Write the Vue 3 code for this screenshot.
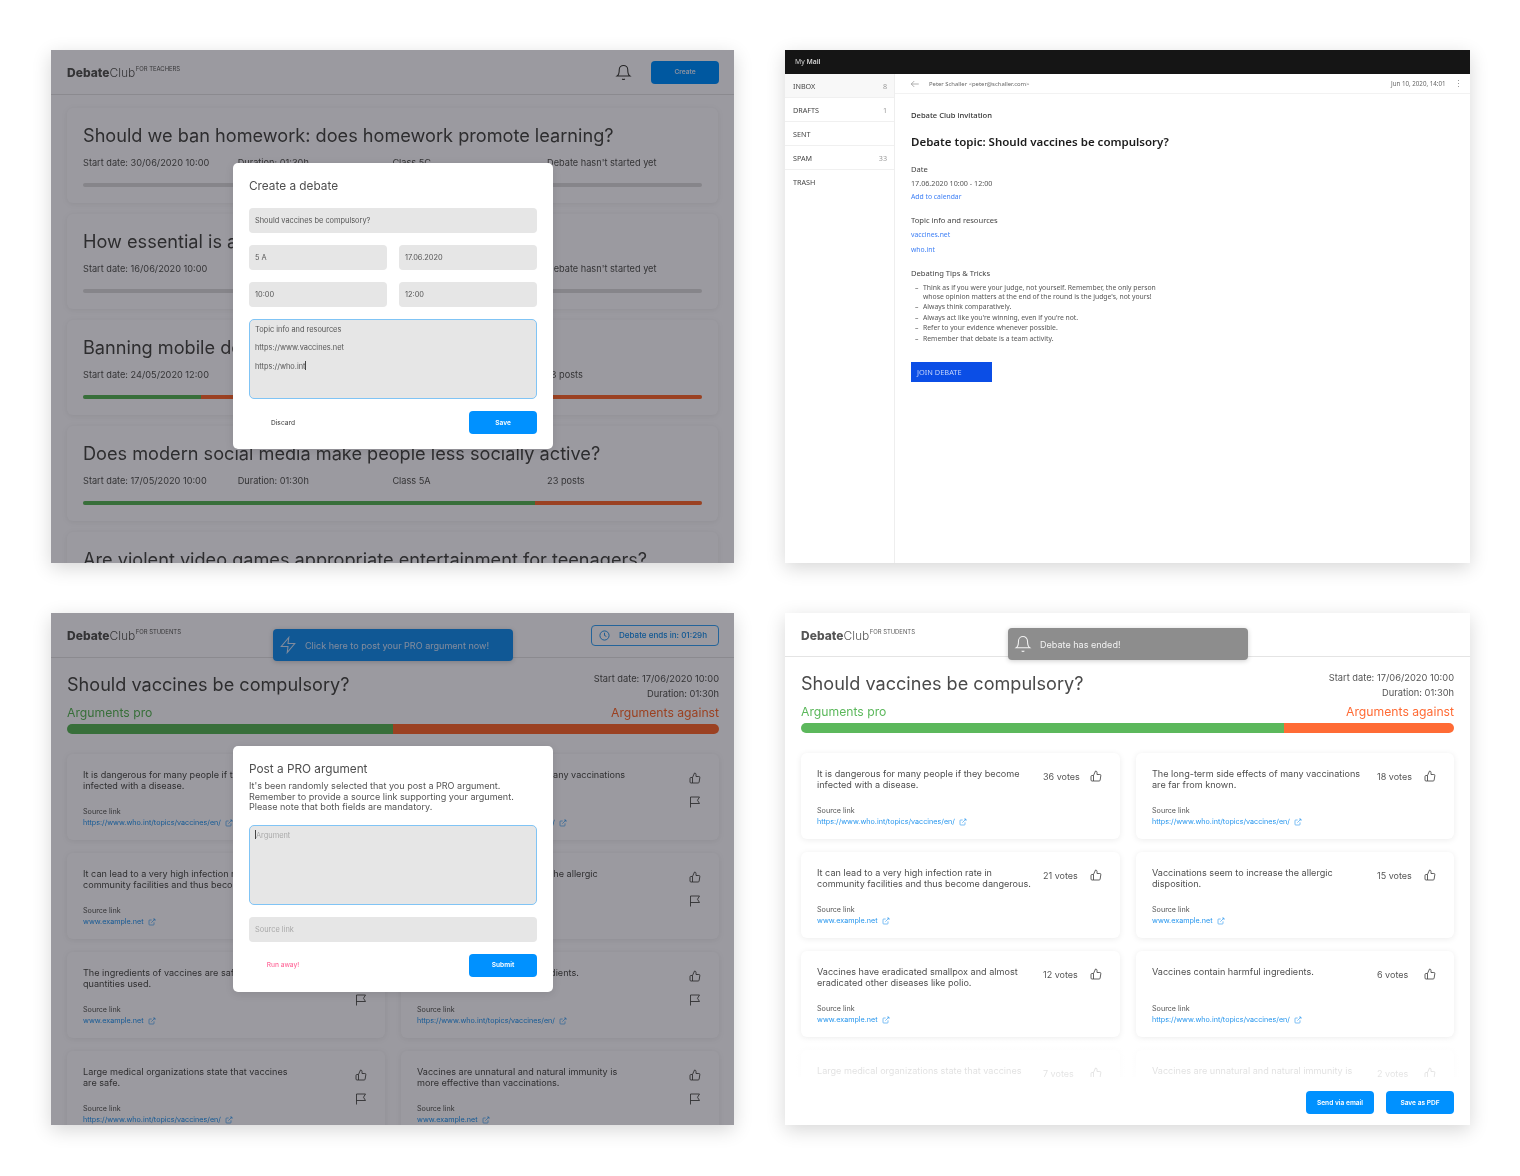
<template>
  <div class="board">
    <!-- teacher dashboard with create modal -->
    <section class="screen">
      <header class="top">
        <div class="logo"><b>Debate</b>Club<sup>FOR TEACHERS</sup></div>
        <div class="top-right">
          <svg class="bell" viewBox="0 0 24 24"><path d="M18 8A6 6 0 0 0 6 8c0 7-3 9-3 9h18s-3-2-3-9" /><path d="M13.73 21a2 2 0 0 1-3.46 0" /></svg>
          <button class="btn create">Create</button>
        </div>
      </header>
      <div class="debates">
        <article v-for="d in debates" :key="d.title" class="debate">
          <h2>{{ d.title }}</h2>
          <div class="facts">
            <span>Start date: {{ d.start }}</span>
            <span>Duration: 01:30h</span>
            <span>{{ d.klass }}</span>
            <span>{{ d.status }}</span>
          </div>
          <div class="line">
            <i v-if="d.pro" class="line-pro" :style="{ width: d.pro + '%' }"></i>
            <i v-if="d.pro" class="line-con"></i>
          </div>
        </article>
      </div>
      <div class="dim"></div>
      <div class="modal modal-create">
        <h3>Create a debate</h3>
        <div class="field">Should vaccines be compulsory?</div>
        <div class="pair">
          <div class="field">5 A</div>
          <div class="field">17.06.2020</div>
        </div>
        <div class="pair">
          <div class="field">10:00</div>
          <div class="field">12:00</div>
        </div>
        <div class="area">
          <p>Topic info and resources</p>
          <p>https://www.vaccines.net</p>
          <p>https://who.int<span class="caret"></span></p>
        </div>
        <div class="modal-foot">
          <span class="ghost">Discard</span>
          <button class="btn">Save</button>
        </div>
      </div>
    </section>

    <!-- mail client -->
    <section class="screen mail">
      <div class="mail-bar">My <b>Mail</b></div>
      <div class="mail-body">
        <aside class="folders">
          <div v-for="f in folders" :key="f.name" class="folder" :class="{ current: f.name === 'INBOX' }">
            <span>{{ f.name }}</span><em>{{ f.count }}</em>
          </div>
        </aside>
        <div class="message">
          <div class="msg-head">
            <svg class="back" viewBox="0 0 24 24"><path d="M21 12H3M10 5l-7 7 7 7" /></svg>
            <span class="from">Peter Schaller &lt;peter@schaller.com&gt;</span>
            <span class="when">Jun 10, 2020, 14:01</span>
            <span class="dots"><i></i><i></i><i></i></span>
          </div>
          <div class="msg-text">
            <h4>Debate Club invitation</h4>
            <h3>Debate topic: Should vaccines be compulsory?</h3>
            <h5>Date</h5>
            <p class="date">17.06.2020 10:00 - 12:00</p>
            <a class="cal">Add to calendar</a>
            <h5 class="topic">Topic info and resources</h5>
            <a class="res">vaccines.net</a>
            <a class="res">who.int</a>
            <h5 class="tips">Debating Tips &amp; Tricks</h5>
            <ul>
              <li>Think as if you were your judge, not yourself. Remember, the only person whose opinion matters at the end of the round is the judge's, not yours!</li>
              <li>Always think comparatively.</li>
              <li>Always act like you're winning, even if you're not.</li>
              <li>Refer to your evidence whenever possible.</li>
              <li>Remember that debate is a team activity.</li>
            </ul>
            <button class="join">JOIN DEBATE</button>
          </div>
        </div>
      </div>
    </section>

    <!-- student view, posting an argument -->
    <section class="screen posting">
      <header class="top">
        <div class="logo"><b>Debate</b>Club<sup>FOR STUDENTS</sup></div>
        <div class="timer">
          <svg viewBox="0 0 24 24"><circle cx="12" cy="12" r="10" /><path d="M12 6v6l4 2" /></svg>
          Debate ends in: 01:29h
        </div>
      </header>
      <div class="toast toast-blue">
        <svg viewBox="0 0 24 24"><path d="M13 2 3 14h9l-1 8 10-12h-9l1-8z" /></svg>
        Click here to post your PRO argument now!
      </div>
      <div class="debate-head">
        <div class="head-row">
          <h1>Should vaccines be compulsory?</h1>
          <div class="head-meta">Start date: 17/06/2020 10:00<br />Duration: 01:30h</div>
        </div>
        <div class="sides"><span class="pro">Arguments pro</span><span class="con">Arguments against</span></div>
        <div class="meter"><i class="meter-pro" style="width: 50%"></i><i class="meter-con"></i></div>
      </div>
      <div class="args">
        <article v-for="a in postArgs" :key="a.text" class="arg">
          <div class="arg-main">
            <p>{{ a.text }}</p>
            <div class="source">
              <small>Source link</small>
              <a>{{ a.link }}
                <svg viewBox="0 0 24 24"><path d="M18 13v6a2 2 0 0 1-2 2H5a2 2 0 0 1-2-2V8a2 2 0 0 1 2-2h6" /><path d="M15 3h6v6M10 14 21 3" /></svg>
              </a>
            </div>
          </div>
          <div class="arg-actions">
            <svg viewBox="0 0 24 24"><path d="M14 9V5a3 3 0 0 0-3-3l-4 9v11h11.28a2 2 0 0 0 2-1.7l1.38-9a2 2 0 0 0-2-2.3zM7 22H4a2 2 0 0 1-2-2v-7a2 2 0 0 1 2-2h3" /></svg>
            <svg viewBox="0 0 24 24"><path d="M3 23V2h18l-4 6.5L21 15H3" /></svg>
          </div>
        </article>
      </div>
      <div class="dim"></div>
      <div class="modal modal-post">
        <h3>Post a PRO argument</h3>
        <p class="intro">It's been randomly selected that you post a PRO argument.<br />Remember to provide a source link supporting your argument.<br />Please note that both fields are mandatory.</p>
        <div class="area"><p class="hint"><span class="caret"></span>Argument</p></div>
        <div class="field hint">Source link</div>
        <div class="modal-foot">
          <span class="ghost pink">Run away!</span>
          <button class="btn">Submit</button>
        </div>
      </div>
    </section>

    <!-- student view, debate finished -->
    <section class="screen ended">
      <header class="top">
        <div class="logo"><b>Debate</b>Club<sup>FOR STUDENTS</sup></div>
      </header>
      <div class="toast toast-grey">
        <svg viewBox="0 0 24 24"><path d="M18 8A6 6 0 0 0 6 8c0 7-3 9-3 9h18s-3-2-3-9" /><path d="M13.73 21a2 2 0 0 1-3.46 0" /></svg>
        Debate has ended!
      </div>
      <div class="debate-head">
        <div class="head-row">
          <h1>Should vaccines be compulsory?</h1>
          <div class="head-meta">Start date: 17/06/2020 10:00<br />Duration: 01:30h</div>
        </div>
        <div class="sides"><span class="pro">Arguments pro</span><span class="con">Arguments against</span></div>
        <div class="meter"><i class="meter-pro" style="width: 74%"></i><i class="meter-con"></i></div>
      </div>
      <div class="results">
        <div class="args">
          <article v-for="a in voteArgs" :key="a.text" class="arg">
            <div class="arg-main">
              <p>{{ a.text }}</p>
              <div class="source">
                <small>Source link</small>
                <a>{{ a.link }}
                  <svg viewBox="0 0 24 24"><path d="M18 13v6a2 2 0 0 1-2 2H5a2 2 0 0 1-2-2V8a2 2 0 0 1 2-2h6" /><path d="M15 3h6v6M10 14 21 3" /></svg>
                </a>
              </div>
            </div>
            <div class="arg-votes">
              <span>{{ a.votes }} votes</span>
              <svg viewBox="0 0 24 24"><path d="M14 9V5a3 3 0 0 0-3-3l-4 9v11h11.28a2 2 0 0 0 2-1.7l1.38-9a2 2 0 0 0-2-2.3zM7 22H4a2 2 0 0 1-2-2v-7a2 2 0 0 1 2-2h3" /></svg>
            </div>
          </article>
        </div>
        <div class="fade"></div>
      </div>
      <footer class="actions">
        <button class="btn">Send via email</button>
        <button class="btn">Save as PDF</button>
      </footer>
    </section>
  </div>
</template>

<script setup>
const WHO = 'https://www.who.int/topics/vaccines/en/'
const EXAMPLE = 'www.example.net'

const debates = [
  { title: 'Should we ban homework: does homework promote learning?', start: '30/06/2020 10:00', klass: 'Class 5C', status: "Debate hasn't started yet", pro: 0 },
  { title: 'How essential is art in education?', start: '16/06/2020 10:00', klass: 'Class 5B', status: "Debate hasn't started yet", pro: 0 },
  { title: 'Banning mobile devices at school?', start: '24/05/2020 12:00', klass: 'Class 5A', status: '13 posts', pro: 19 },
  { title: 'Does modern social media make people less socially active?', start: '17/05/2020 10:00', klass: 'Class 5A', status: '23 posts', pro: 73 },
  { title: 'Are violent video games appropriate entertainment for teenagers?', start: '10/05/2020 10:00', klass: 'Class 5A', status: '18 posts', pro: 50 }
]

const folders = [
  { name: 'INBOX', count: 8 },
  { name: 'DRAFTS', count: 1 },
  { name: 'SENT', count: '' },
  { name: 'SPAM', count: 33 },
  { name: 'TRASH', count: '' }
]

const postArgs = [
  { text: 'It is dangerous for many people if they become infected with a disease.', link: WHO },
  { text: 'The long-term side effects of many vaccinations are far from known.', link: WHO },
  { text: 'It can lead to a very high infection rate in community facilities and thus become dangerous.', link: EXAMPLE },
  { text: 'Vaccinations seem to increase the allergic disposition.', link: EXAMPLE },
  { text: 'The ingredients of vaccines are safe in the quantities used.', link: EXAMPLE },
  { text: 'Vaccines contain harmful ingredients.', link: WHO },
  { text: 'Large medical organizations state that vaccines are safe.', link: WHO },
  { text: 'Vaccines are unnatural and natural immunity is more effective than vaccinations.', link: EXAMPLE }
]

const voteArgs = [
  { text: 'It is dangerous for many people if they become infected with a disease.', link: WHO, votes: 36 },
  { text: 'The long-term side effects of many vaccinations are far from known.', link: WHO, votes: 18 },
  { text: 'It can lead to a very high infection rate in community facilities and thus become dangerous.', link: EXAMPLE, votes: 21 },
  { text: 'Vaccinations seem to increase the allergic disposition.', link: EXAMPLE, votes: 15 },
  { text: 'Vaccines have eradicated smallpox and almost eradicated other diseases like polio.', link: EXAMPLE, votes: 12 },
  { text: 'Vaccines contain harmful ingredients.', link: WHO, votes: 6 },
  { text: 'Large medical organizations state that vaccines are safe.', link: WHO, votes: 7 },
  { text: 'Vaccines are unnatural and natural immunity is more effective than vaccinations.', link: EXAMPLE, votes: 2 }
]
</script>

<style>
html, body { background: #fff; }
</style>

<style scoped>
.board {
  display: grid;
  grid-template-columns: 683px 685px;
  grid-template-rows: 513px 512px;
  gap: 50px 51px;
  padding: 50px 50px 51px 51px;
  width: 1520px;
  height: 1176px;
  box-sizing: border-box;
  background: #fff;
  font-family: Inter, "Liberation Sans", sans-serif;
  color: #4a4a4a;
}
.screen {
  position: relative;
  overflow: hidden;
  background: #fff;
  box-shadow: 0 5px 18px rgba(0, 0, 0, 0.16);
}
h1, h2, h3, h4, h5, p, ul { margin: 0; font-weight: 400; }

.top {
  display: flex;
  align-items: center;
  justify-content: space-between;
  height: 45px;
  padding: 0 15px 0 16px;
  box-sizing: border-box;
  border-bottom: 1px solid #e4e4e4;
}
.logo {
  margin-top: 2px;
  font-size: 12px;
  color: #5a5a5a;
  font-weight: 300;
  line-height: 14px;
}
.logo b { font-weight: 800; color: #555; }
.logo sup {
  font-size: 5.9px;
  font-weight: 400;
  vertical-align: 6px;
  line-height: 0;
  margin-left: 0.5px;
}
.top-right { display: flex; align-items: center; gap: 19px; }
.bell {
  width: 17px;
  height: 17px;
  fill: none;
  stroke: #3a3a3a;
  stroke-width: 1.5;
}
.btn {
  width: 68px;
  height: 23px;
  padding: 0;
  border: 0;
  border-radius: 4px;
  background: #0091ff;
  color: #fff;
  font: 600 6.6px Inter, sans-serif;
}
.create { background: #0091ff; color: #dfeeff; }

.debates {
  display: flex;
  flex-direction: column;
  gap: 11px;
  padding: 13px 16px 0;
}
.debate {
  flex: none;
  height: 95px;
  padding: 16px 16px 0;
  box-sizing: border-box;
  border-radius: 6px;
  background: #fff;
  box-shadow: 0 1px 6px rgba(0, 0, 0, 0.07);
}
.debate h2 {
  font-size: 18.15px;
  line-height: 23.5px;
  color: #4a4a4a;
  white-space: nowrap;
}
.facts {
  display: grid;
  grid-template-columns: repeat(4, 154.7px);
  margin-top: 9.5px;
  font-size: 9.2px;
  line-height: 12px;
  color: #555;
  white-space: nowrap;
}
.line {
  display: flex;
  height: 4px;
  margin-top: 14px;
  border-radius: 2px;
  overflow: hidden;
  background: #dcdcdc;
}
.line-pro { background: #5cb85c; }
.line-con { flex: 1; background: #ff6b35; }

.dim {
  position: absolute;
  inset: 0;
  background: #9b9aa0;
  mix-blend-mode: multiply;
}
.modal {
  position: absolute;
  left: 182px;
  width: 320px;
  padding: 0 16px;
  box-sizing: border-box;
  border-radius: 5px;
  background: #fff;
  box-shadow: 0 2px 8px rgba(0, 0, 0, 0.1);
}
.modal-create { top: 113px; height: 286px; }
.modal-post { top: 133px; height: 246px; }
.modal h3 {
  font-size: 11.8px;
  line-height: 14px;
  padding-top: 16px;
  color: #4f4f4f;
}
.field {
  height: 25px;
  margin-top: 12px;
  padding-left: 6px;
  border-radius: 4px;
  background: #e6e6e6;
  font-size: 7.4px;
  line-height: 25px;
  color: #555;
}
.modal-create h3 { margin-bottom: 15px; }
.modal-create h3 + .field { margin-top: 0; }
.pair {
  display: grid;
  grid-template-columns: 1fr 1fr;
  gap: 12px;
}
.area {
  height: 80px;
  margin-top: 12px;
  padding: 1px 5px;
  box-sizing: border-box;
  border: 1px solid #80c4f5;
  border-radius: 5px;
  background: #e6e6e6;
  font-size: 7.4px;
  color: #555;
}
.area p { line-height: 18.3px; }
.caret {
  display: inline-block;
  width: 1px;
  height: 9px;
  vertical-align: -1.5px;
  background: #444;
}
.hint { color: #a9a9a9; }
.modal-foot {
  display: flex;
  justify-content: space-between;
  align-items: center;
  margin-top: 12px;
}
.ghost {
  width: 68px;
  text-align: center;
  font-size: 6.6px;
  font-weight: 500;
  color: #555;
}
.pink { color: #ff6c9c; }
.intro {
  margin-top: 5px;
  font-size: 9.05px;
  line-height: 10.5px;
  color: #555;
}

/* mail */
.mail { font-family: "Noto Sans", sans-serif; }
.mail-bar {
  height: 24px;
  padding-left: 10px;
  background: #151515;
  color: #d8d8d8;
  font-size: 6.8px;
  line-height: 24px;
}
.mail-bar b { font-weight: 600; }
.mail-body { display: flex; height: 489px; }
.folders {
  flex: none;
  width: 110px;
  box-sizing: border-box;
  border-right: 1px solid #eee;
}
.folder {
  display: flex;
  justify-content: space-between;
  height: 24px;
  padding: 1px 7px 0 8px;
  box-sizing: border-box;
  border-bottom: 1px solid #f0f0f0;
  font-size: 7.2px;
  line-height: 23px;
  color: #444;
}
.folder:last-child { border-bottom: 0; }
.folder em { font-style: normal; color: #999; }
.folder.current { background: #f8f8f8; }
.message { flex: 1; }
.msg-head {
  display: flex;
  align-items: center;
  height: 20px;
  padding: 0 11px 0 15px;
  box-sizing: border-box;
  border-bottom: 1px solid #f2f2f2;
  font-size: 5.9px;
  color: #666;
}
.back {
  width: 10px;
  height: 10px;
  margin-right: 9px;
  fill: none;
  stroke: #888;
  stroke-width: 1.6;
}
.when { margin-left: auto; margin-right: 12px; font-size: 6.2px; }
.dots { display: flex; flex-direction: column; gap: 1.5px; }
.dots i { width: 1.5px; height: 1.5px; background: #999; }
.msg-text { padding: 16px 16px 0; }
.msg-text h4 {
  font-size: 7.6px;
  line-height: 11px;
  font-weight: 500;
  color: #333;
}
.msg-text h3 {
  margin-top: 13px;
  font-size: 11.5px;
  line-height: 16px;
  font-weight: 600;
  color: #1c1c1c;
}
.msg-text h5 {
  margin-top: 14px;
  font-size: 7.6px;
  line-height: 11px;
  color: #444;
}
.msg-text h5.topic { margin-top: 13px; }
.msg-text h5.tips { margin-top: 13px; }
.date {
  margin-top: 3px;
  font-size: 7.2px;
  line-height: 11px;
  color: #555;
}
.msg-text a {
  display: block;
  font-size: 6.8px;
  color: #3d7ff5;
}
.cal { margin-top: 2px; line-height: 11px; }
.res { margin-top: 3px; line-height: 11px; }
.res + .res { margin-top: 4px; }
.msg-text ul {
  list-style: none;
  width: 250px;
  margin-top: 3.5px;
  padding: 0;
  font-size: 6.8px;
  line-height: 9.2px;
  color: #555;
}
.msg-text li {
  position: relative;
  padding-left: 12px;
  margin-bottom: 1.4px;
}
.msg-text li::before {
  content: "–";
  position: absolute;
  left: 4px;
}
.join {
  display: block;
  width: 81px;
  height: 20px;
  margin-top: 19px;
  padding: 0 0 0 6px;
  border: 0;
  background: #0b4ee6;
  color: #c5d5fb;
  font: 7.4px "Noto Sans", sans-serif;
  text-align: left;
}

/* debate view */
.timer {
  display: flex;
  align-items: center;
  gap: 9px;
  width: 128px;
  height: 21px;
  padding-left: 7px;
  box-sizing: border-box;
  border: 1px solid #3aa6f5;
  border-radius: 4px;
  color: #1a90ea;
  font-size: 8.05px;
  font-weight: 500;
  white-space: nowrap;
}
.timer svg { width: 11px; height: 11px; fill: none; stroke: currentColor; stroke-width: 2; }
.toast {
  position: absolute;
  top: 16px;
  left: 222px;
  display: flex;
  align-items: center;
  gap: 8px;
  width: 240px;
  height: 32px;
  padding-left: 6px;
  box-sizing: border-box;
  border-radius: 4px;
  font-size: 9.05px;
  box-shadow: 0 1px 5px rgba(0, 0, 0, 0.2);
}
.toast svg { width: 18px; height: 18px; fill: none; stroke: currentColor; stroke-width: 1.4; }
.toast-blue { background: #1a92ee; color: #d4e6fa; }
.toast-grey { top: 15px; left: 223px; background: #8d8d8d; color: #f2f2f2; }
.debate-head { padding: 14px 15px 0 16px; }
.head-row { display: flex; justify-content: space-between; }
.debate-head h1 {
  font-size: 18.1px;
  line-height: 25px;
  color: #4a4a4a;
}
.head-meta {
  font-size: 9.3px;
  line-height: 14.6px;
  text-align: right;
  color: #555;
}
.sides {
  display: flex;
  justify-content: space-between;
  margin-top: 4px;
  font-size: 12.2px;
  line-height: 16px;
}
.pro { color: #5cb85c; }
.con { color: #ff6b35; }
.meter {
  display: flex;
  height: 10px;
  margin-top: 3px;
  border-radius: 5px;
  overflow: hidden;
}
.meter-pro { background: #5cb85c; }
.meter-con { flex: 1; background: #ff6b35; }
.args {
  display: grid;
  grid-template-columns: 318px 318px;
  gap: 13px 16px;
  padding: 20px 15px 0 16px;
}
.arg {
  display: flex;
  height: 86px;
  padding: 16px 18px 0 16px;
  box-sizing: border-box;
  border-radius: 6px;
  background: #fff;
  box-shadow: 0 1px 6px rgba(0, 0, 0, 0.08);
}
.arg-main {
  flex: 1;
  min-width: 0;
  height: 58px;
  display: flex;
  flex-direction: column;
  justify-content: space-between;
}
.arg-main p {
  max-width: 218px;
  font-size: 9.1px;
  line-height: 10.4px;
  color: #4f4f4f;
}
.source { font-size: 7.2px; }
.source small { display: block; font-size: 7.2px; line-height: 10px; color: #555; }
.source a {
  display: flex;
  align-items: center;
  gap: 4px;
  line-height: 11px;
  color: #2696ee;
}
.source svg { width: 8px; height: 8px; fill: none; stroke: currentColor; stroke-width: 1.8; }
.arg-actions {
  display: flex;
  flex-direction: column;
  gap: 12px;
  padding-top: 2px;
}
.arg-actions svg,
.arg-votes svg {
  width: 12px;
  height: 12px;
  fill: none;
  stroke: #444;
  stroke-width: 1.7;
}
.arg-votes {
  flex: none;
  display: flex;
  width: 59px;
  margin-left: 7px;
  justify-content: space-between;
  align-items: flex-start;
  font-size: 9px;
  line-height: 14px;
  color: #555;
  white-space: nowrap;
  padding-top: 1px;
}

/* finished variant is a pixel shorter on top */
.ended .top { height: 44px; }
.ended .debate-head { padding-right: 16px; }
.ended .args { grid-template-columns: 319px 318px; padding-right: 16px; }
.results {
  position: relative;
  height: 344px;
  overflow: hidden;
}
.fade {
  position: absolute;
  left: 0;
  right: 0;
  bottom: 0;
  height: 40px;
  background: linear-gradient(rgba(255, 255, 255, 0), rgba(255, 255, 255, 0.75) 30%, rgba(255, 255, 255, 0.85));
}
.actions {
  display: flex;
  justify-content: flex-end;
  gap: 12px;
  padding: 14px 16px 0;
}
</style>
